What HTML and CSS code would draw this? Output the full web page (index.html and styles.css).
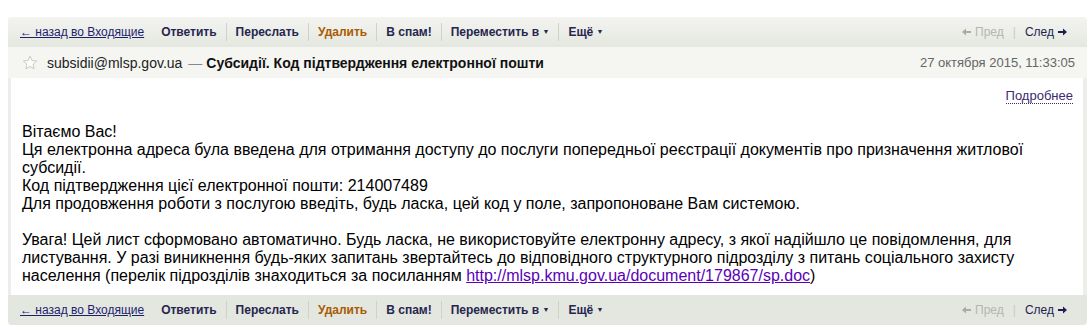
FILE: index.html
```html
<!DOCTYPE html>
<html lang="uk">
<head>
  <meta charset="UTF-8" />
  <title>Субсидії. Код підтвердження електронної пошти</title>
  <link rel="stylesheet" href="styles.css">
</head>
<body>

<div class="message">

  <div class="toolbar toolbar-top">
    <a class="back" href="#">← назад во Входящие</a>
    <div class="actions">
      <span class="btn">Ответить</span>
      <span class="btn">Переслать</span>
      <span class="btn delete">Удалить</span>
      <span class="btn">В спам!</span>
      <span class="btn">Переместить в <i class="caret">▼</i></span>
      <span class="btn">Ещё <i class="caret">▼</i></span>
    </div>
    <div class="pager">
      <span class="prev">
        <svg width="9" height="8" viewBox="0 0 9 8"><path d="M0 4L4 0.5V3H9V5H4V7.5z" fill="#a9aba5"/></svg>
        Пред
      </span>
      <span class="pipe">|</span>
      <span class="next">
        След
        <svg width="9" height="8" viewBox="0 0 9 8"><path d="M9 4L5 0.5V3H0V5H5V7.5z" fill="#1e1e50"/></svg>
      </span>
    </div>
  </div>

  <div class="msg-head">
    <svg class="star" width="16" height="16" viewBox="0 0 16 16">
      <path d="M8 1.2l2 4.3 4.6.5-3.4 3.2.9 4.6L8 11.5l-4.1 2.3.9-4.6L1.4 6l4.6-.5z" fill="#fbfbf8" stroke="#c9cbc4" stroke-width="1"/>
    </svg>
    <span class="from">subsidii@mlsp.gov.ua</span>
    <span class="dash">—</span>
    <span class="subject">Субсидії. Код підтвердження електронної пошти</span>
    <span class="date">27 октября 2015, 11:33:05</span>
  </div>

  <div class="msg-body">
    <div class="more"><a href="#">Подробнее</a></div>
    <div class="text">
      Вітаємо Вас!<br>
      Ця електронна адреса була введена для отримання доступу до послуги попередньої реєстрації документів про призначення житлової субсидії.<br>
      Код підтвердження цієї електронної пошти: 214007489<br>
      Для продовження роботи з послугою введіть, будь ласка, цей код у поле, запропоноване Вам системою.<br>
      <br>
      Увага! Цей лист сформовано автоматично. Будь ласка, не використовуйте електронну адресу, з якої надійшло це повідомлення, для листування. У разі виникнення будь-яких запитань звертайтесь до відповідного структурного підрозділу з питань соціального захисту населення (перелік підрозділів знаходиться за посиланням <a class="doc" href="#">http://mlsp.kmu.gov.ua/document/179867/sp.doc</a>)
    </div>
  </div>

  <div class="toolbar toolbar-bottom">
    <a class="back" href="#">← назад во Входящие</a>
    <div class="actions">
      <span class="btn">Ответить</span>
      <span class="btn">Переслать</span>
      <span class="btn delete">Удалить</span>
      <span class="btn">В спам!</span>
      <span class="btn">Переместить в <i class="caret">▼</i></span>
      <span class="btn">Ещё <i class="caret">▼</i></span>
    </div>
    <div class="pager">
      <span class="prev">
        <svg width="9" height="8" viewBox="0 0 9 8"><path d="M0 4L4 0.5V3H9V5H4V7.5z" fill="#a9aba5"/></svg>
        Пред
      </span>
      <span class="pipe">|</span>
      <span class="next">
        След
        <svg width="9" height="8" viewBox="0 0 9 8"><path d="M9 4L5 0.5V3H0V5H5V7.5z" fill="#1e1e50"/></svg>
      </span>
    </div>
  </div>

</div>

</body>
</html>
```

FILE: styles.css
```css
body {
  font-family: "Liberation Sans", Arial, sans-serif;
  background: #fff;
  margin: 0;
  padding: 17px 0 0 8px;
  color: #000;
}
.message {
  width: 1079px;
}
.toolbar {
  display: flex;
  align-items: center;
  height: 30px;
  padding: 0 12px;
  font-size: 12px;
}
.toolbar-top {
  background: linear-gradient(#f3f4f0, #e4e7e0);
  border-radius: 3px 3px 0 0;
}
.toolbar-bottom {
  background: #e3e7e0;
  border-radius: 0 0 4px 4px;
}
.back {
  color: #1e1e6e;
  font-size: 12px;
  margin-right: 8px;
}
.actions {
  display: flex;
  align-items: center;
}
.btn {
  font-weight: bold;
  color: #26264f;
  padding: 0 9px;
  border-left: 1px solid #cfd2cb;
  line-height: 18px;
}
.btn:first-child {
  border-left: none;
}
.btn.delete {
  color: #a95b00;
}
.caret {
  font-style: normal;
  font-size: 7px;
  vertical-align: 2px;
}
.pager {
  margin-left: auto;
  display: flex;
  gap: 9px;
  align-items: center;
  margin-right: 8px;
}
.prev, .next {
  display: flex;
  align-items: center;
  gap: 4px;
}
.prev {
  color: #b4b6b0;
}
.pipe {
  color: #c9ccc5;
}
.next {
  color: #1e1e50;
}
.msg-head {
  display: flex;
  align-items: center;
  height: 31px;
  background: #f5f5f1;
  padding: 0 12px 0 14px;
  font-size: 14px;
}
.star {
  margin-right: 9px;
}
.from {
  color: #222;
}
.dash {
  color: #888;
  margin: 0 4px 0 6px;
}
.subject {
  font-weight: bold;
  color: #111;
}
.date {
  margin-left: auto;
  font-size: 13px;
  color: #666;
}
.msg-body {
  background: #fff;
  border-left: 3px solid #eceee9;
  border-right: 4px solid #eceee9;
  padding: 10px 10px 10px 11px;
}
.more {
  text-align: right;
  font-size: 13px;
}
.more a {
  color: #3d2a6e;
  text-decoration: none;
  border-bottom: 1px dotted #3d2a6e;
}
.text {
  margin-top: 20px;
  font-size: 16px;
  line-height: 18px;
}
.doc {
  color: #5a00b8;
}
```
